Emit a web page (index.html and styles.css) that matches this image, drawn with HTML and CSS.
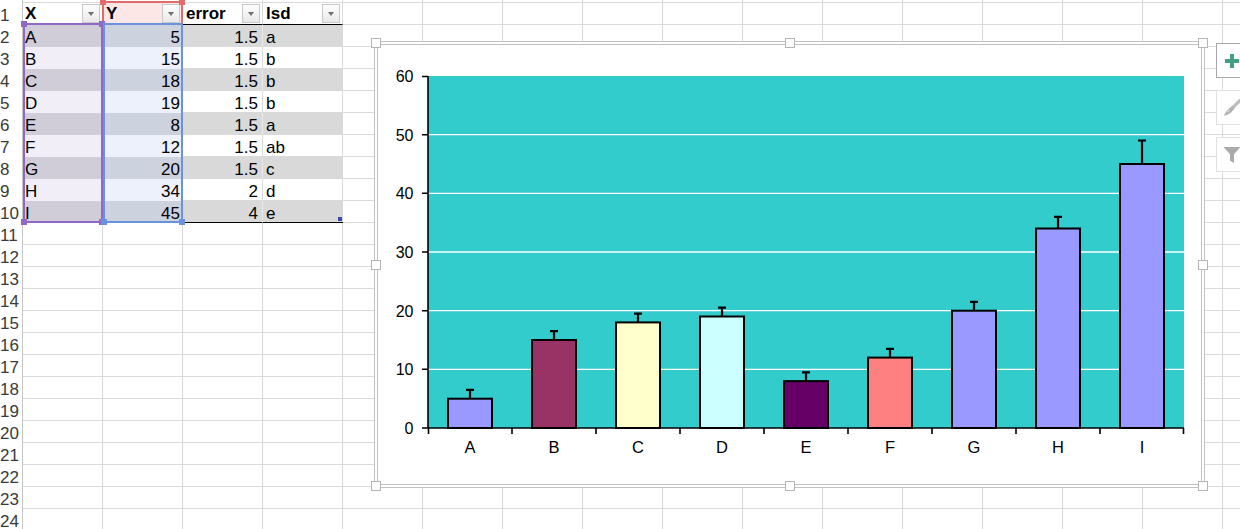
FILE: index.html
```html
<!DOCTYPE html>
<html>
<head>
<meta charset="utf-8">
<title>Chart</title>
<link rel="stylesheet" href="styles.css">
</head>
<body>
<div class="sheet">
  <div class="rowhdr">
    <div class="rn"></div>
    <div class="rn">1</div><div class="rn">2</div><div class="rn">3</div><div class="rn">4</div>
    <div class="rn">5</div><div class="rn">6</div><div class="rn">7</div><div class="rn">8</div>
    <div class="rn">9</div><div class="rn">10</div><div class="rn">11</div><div class="rn">12</div>
    <div class="rn">13</div><div class="rn">14</div><div class="rn">15</div><div class="rn">16</div>
    <div class="rn">17</div><div class="rn">18</div><div class="rn">19</div><div class="rn">20</div>
    <div class="rn">21</div><div class="rn">22</div><div class="rn">23</div><div class="rn">24</div>
  </div>
  <div class="cells">
    <div class="table">
      <div class="row head">
        <div class="cell ca">X<span class="dd"></span></div>
        <div class="cell cb name">Y<span class="dd"></span></div>
        <div class="cell cc">error<span class="dd"></span></div>
        <div class="cell cd">lsd<span class="dd"></span></div>
      </div>
      <div class="row g"><div class="cell ca">A</div><div class="cell cb">5</div><div class="cell cc">1.5</div><div class="cell cd">a</div></div>
      <div class="row w"><div class="cell ca">B</div><div class="cell cb">15</div><div class="cell cc">1.5</div><div class="cell cd">b</div></div>
      <div class="row g"><div class="cell ca">C</div><div class="cell cb">18</div><div class="cell cc">1.5</div><div class="cell cd">b</div></div>
      <div class="row w"><div class="cell ca">D</div><div class="cell cb">19</div><div class="cell cc">1.5</div><div class="cell cd">b</div></div>
      <div class="row g"><div class="cell ca">E</div><div class="cell cb">8</div><div class="cell cc">1.5</div><div class="cell cd">a</div></div>
      <div class="row w"><div class="cell ca">F</div><div class="cell cb">12</div><div class="cell cc">1.5</div><div class="cell cd">ab</div></div>
      <div class="row g"><div class="cell ca">G</div><div class="cell cb">20</div><div class="cell cc">1.5</div><div class="cell cd">c</div></div>
      <div class="row w"><div class="cell ca">H</div><div class="cell cb">34</div><div class="cell cc">2</div><div class="cell cd">d</div></div>
      <div class="row g last"><div class="cell ca">I</div><div class="cell cb">45</div><div class="cell cc">4</div><div class="cell cd">e</div></div>

      <div class="sel sel-name"><span class="h tl"></span><span class="h tr"></span><span class="h bl"></span><span class="h br"></span></div>
      <div class="sel sel-cat"><span class="h tl"></span><span class="h tr"></span><span class="h bl"></span><span class="h br"></span></div>
      <div class="sel sel-val"><span class="h tl"></span><span class="h tr"></span><span class="h bl"></span><span class="h br"></span></div>
      <span class="resize"></span>
    </div>
  </div>
</div>

<div class="chart">
  <span class="ch c-tl"></span><span class="ch c-tm"></span><span class="ch c-tr"></span>
  <span class="ch c-ml"></span><span class="ch c-mr"></span>
  <span class="ch c-bl"></span><span class="ch c-bm"></span><span class="ch c-br"></span>
  <svg class="plot" width="823" height="439" viewBox="378 45 823 439">
    <rect x="428" y="76" width="756" height="352" fill="#33cccc"/>
    <g stroke="#ffffff" stroke-width="1.3">
      <line x1="428" y1="369.3" x2="1184" y2="369.3"/>
      <line x1="428" y1="310.7" x2="1184" y2="310.7"/>
      <line x1="428" y1="252" x2="1184" y2="252"/>
      <line x1="428" y1="193.3" x2="1184" y2="193.3"/>
      <line x1="428" y1="134.7" x2="1184" y2="134.7"/>
    </g>
    <g stroke="#000" stroke-width="2">
      <rect x="448" y="398.7" width="44" height="29.3" fill="#9999ff"/>
      <rect x="532" y="340" width="44" height="88" fill="#993366"/>
      <rect x="616" y="322.4" width="44" height="105.6" fill="#ffffcc"/>
      <rect x="700" y="316.5" width="44" height="111.5" fill="#ccffff"/>
      <rect x="784" y="381.1" width="44" height="46.9" fill="#660066"/>
      <rect x="868" y="357.6" width="44" height="70.4" fill="#ff8080"/>
      <rect x="952" y="310.7" width="44" height="117.3" fill="#9999ff"/>
      <rect x="1036" y="228.5" width="44" height="199.5" fill="#9999ff"/>
      <rect x="1120" y="164" width="44" height="264" fill="#9999ff"/>
    </g>
    <g stroke="#000" stroke-width="2.2" fill="none">
      <path d="M470 398.7V389.9M466 389.9H474"/>
      <path d="M554 340V331.2M550 331.2H558"/>
      <path d="M638 322.4V313.6M634 313.6H642"/>
      <path d="M722 316.5V307.7M718 307.7H726"/>
      <path d="M806 381.1V372.3M802 372.3H810"/>
      <path d="M890 357.6V348.8M886 348.8H894"/>
      <path d="M974 310.7V301.9M970 301.9H978"/>
      <path d="M1058 228.5V216.8M1054 216.8H1062"/>
      <path d="M1142 164V140.5M1138 140.5H1146"/>
    </g>
    <g stroke="#000" stroke-width="1.6" fill="none">
      <path d="M428 76V428"/>
      <path d="M422 76.5H428M422 134.7H428M422 193.3H428M422 252H428M422 310.7H428M422 369.3H428M422 428H1184"/>
      <path d="M428.5 428V434M512 428V434M596 428V434M680 428V434M764 428V434M848 428V434M932 428V434M1016 428V434M1100 428V434M1183.5 428V434"/>
    </g>
    <g class="ylab">
      <text x="413.5" y="82">60</text>
      <text x="413.5" y="140.5">50</text>
      <text x="413.5" y="199">40</text>
      <text x="413.5" y="258">30</text>
      <text x="413.5" y="316.5">20</text>
      <text x="413.5" y="375">10</text>
      <text x="413.5" y="433.5">0</text>
    </g>
    <g class="xlab">
      <text x="470" y="453.3">A</text>
      <text x="554" y="453.3">B</text>
      <text x="638" y="453.3">C</text>
      <text x="722" y="453.3">D</text>
      <text x="806" y="453.3">E</text>
      <text x="890" y="453.3">F</text>
      <text x="974" y="453.3">G</text>
      <text x="1058" y="453.3">H</text>
      <text x="1142" y="453.3">I</text>
    </g>
  </svg>
</div>

<div class="tools">
  <div class="tool tool-active">
    <svg width="14" height="14" viewBox="0 0 14 14"><path d="M5 0H9V5H14V9H9V14H5V9H0V5H5Z" fill="#43a07f"/></svg>
  </div>
  <div class="tool">
    <svg width="18" height="18" viewBox="0 0 18 18">
      <path d="M17.2 1.2L10 8.4" stroke="#bdbdbd" stroke-width="3.2" stroke-linecap="round"/>
      <path d="M9.2 6.8L11.6 9.4L9 12.4C7.6 14.2 4.8 15.8 0.8 16.8C2 13.6 3.8 11.2 6.2 9.4Z" fill="#b2b2b2"/>
      <path d="M4 13.2L6.4 11" stroke="#d6d6d6" stroke-width="1.2"/>
    </svg>
  </div>
  <div class="tool">
    <svg width="18" height="18" viewBox="0 0 18 18">
      <path d="M0.5 1H17.5L11 8.2V17L7 14.8V8.2Z" fill="#ababab"/>
    </svg>
  </div>
</div>
</body>
</html>
```

FILE: styles.css
```css
html, body {
  margin: 0;
  padding: 0;
}
body {
  width: 1240px;
  height: 529px;
  overflow: hidden;
  position: relative;
  background: #ffffff;
  font-family: "Liberation Sans", Arial, sans-serif;
  color: #000;
}

/* ---------- sheet ---------- */
.sheet {
  display: flex;
  margin-top: -19px;
  height: 560px;
}
.rowhdr {
  flex: none;
  width: 22px;
  border-right: 1px solid #c6c6c6;
  background: #fff;
}
.rn {
  box-sizing: border-box;
  height: 22px;
  padding: 3px 0 0 0;
  line-height: 20px;
  font-size: 17px;
  color: #3a3a3a;
  white-space: nowrap;
  overflow: visible;
}
.cells {
  flex: 1;
  padding-top: 22px;
  background-image:
    linear-gradient(to right, transparent 79px, #dadada 79px),
    linear-gradient(to bottom, transparent 21px, #dadada 21px);
  background-size: 80px 22px;
}

.table {
  position: relative;
  display: grid;
  grid-template-columns: repeat(4, 80px);
  grid-auto-rows: 22px;
  width: 320px;
}
.row {
  display: contents;
}
.cell {
  position: relative;
  box-sizing: border-box;
  height: 22px;
  padding-top: 3px;
  line-height: 20px;
  font-size: 17px;
  white-space: nowrap;
  overflow: hidden;
}
.ca { padding-left: 2px; }
.cb { text-align: right; padding-right: 3px; }
.cc { text-align: right; padding-right: 4px; }
.cd { padding-left: 3px; }

.head .cell {
  font-weight: bold;
  padding-top: 1px;
  background: #fff;
  border-right: 1px solid #dadada;
  border-bottom: 1px solid #000;
}
.head .cb.name {
  background: #fce6e6;
}
.head .cell.cb, .head .cell.cc {
  text-align: left;
  padding-left: 3px;
  padding-right: 0;
}
.dd {
  position: absolute;
  right: 2px;
  top: 1px;
  width: 18px;
  height: 19px;
  box-sizing: border-box;
  border: 1px solid #c9c9c9;
  background: linear-gradient(#fdfdfd, #e9e9e9);
}
.dd::after {
  content: "";
  position: absolute;
  left: 5px;
  top: 7px;
  border-left: 3.5px solid transparent;
  border-right: 3.5px solid transparent;
  border-top: 4px solid #707070;
}

.g .ca { background: #d0cdd9; }
.g .cb { background: #cdd2df; }
.g .cc { background: #d9d9d9; border-right: 1px solid #e9e9e9; }
.g .cd { background: #d9d9d9; }
.w .ca { background: #f1eef8; }
.w .cb { background: #ecf1fb; }
.w .cc { border-right: 1px solid #dadada; }
.w .cd { border-right: 1px solid #dadada; }
.last .cell { border-bottom: 1px solid #000; }

/* range highlights (overlaying the cells) */
.sel {
  position: absolute;
  box-sizing: border-box;
  border: 2px solid;
}
.sel-name {
  left: 79px;
  top: -2px;
  width: 81px;
  height: 24px;
  border-color: #e46b6b;
}
.sel-cat {
  left: 0;
  top: 20px;
  width: 80px;
  height: 200px;
  border-color: #9068c6;
}
.sel-val {
  left: 80px;
  top: 20px;
  width: 80px;
  height: 200px;
  border-color: #6b93dd;
}
.h {
  position: absolute;
  width: 6px;
  height: 6px;
}
.sel-name .h { background: #e46b6b; }
.sel-cat .h { background: #9068c6; }
.sel-val .h { background: #6b93dd; }
.h.tl { left: -4px; top: -4px; }
.h.tr { right: -4px; top: -4px; }
.h.bl { left: -4px; bottom: -4px; }
.h.br { right: -4px; bottom: -4px; }
.sel-val .h.tl, .sel-val .h.tr { display: none; }
.sel-name .h.bl, .sel-name .h.br { display: none; }

.resize {
  position: absolute;
  left: 315px;
  top: 214px;
  width: 4px;
  height: 4px;
  background: #3a4ea5;
}

/* ---------- chart ---------- */
.chart {
  position: absolute;
  left: 374px;
  top: 41px;
  width: 831px;
  height: 447px;
  box-sizing: border-box;
  border: 4px double #c2c2c2;
  background: #fff;
}
.plot {
  display: block;
}
.plot text {
  font-family: "Liberation Sans", Arial, sans-serif;
  fill: #000;
}
.ylab text { text-anchor: end; font-size: 16px; }
.xlab text { text-anchor: middle; font-size: 16.5px; }

.ch {
  position: absolute;
  width: 10px;
  height: 10px;
  box-sizing: border-box;
  border: 1px solid #b5b5b5;
  background: #fff;
  z-index: 2;
}
.c-tl { left: -7px; top: -7px; }
.c-tm { left: calc(50% - 5px); top: -7px; }
.c-tr { right: -7px; top: -7px; }
.c-ml { left: -7px; top: calc(50% - 5px); }
.c-mr { right: -7px; top: calc(50% - 5px); }
.c-bl { left: -7px; bottom: -7px; }
.c-bm { left: calc(50% - 5px); bottom: -7px; }
.c-br { right: -7px; bottom: -7px; }

/* ---------- chart tools ---------- */
.tools {
  position: absolute;
  left: 1216px;
  top: 43px;
  display: flex;
  flex-direction: column;
  gap: 12px;
}
.tool {
  box-sizing: border-box;
  width: 32px;
  height: 35px;
  border: 1px solid #e0e0e0;
  background: #fff;
  display: flex;
  align-items: center;
  justify-content: center;
}
.tool-active {
  border-color: #a8a8a8;
}
```
